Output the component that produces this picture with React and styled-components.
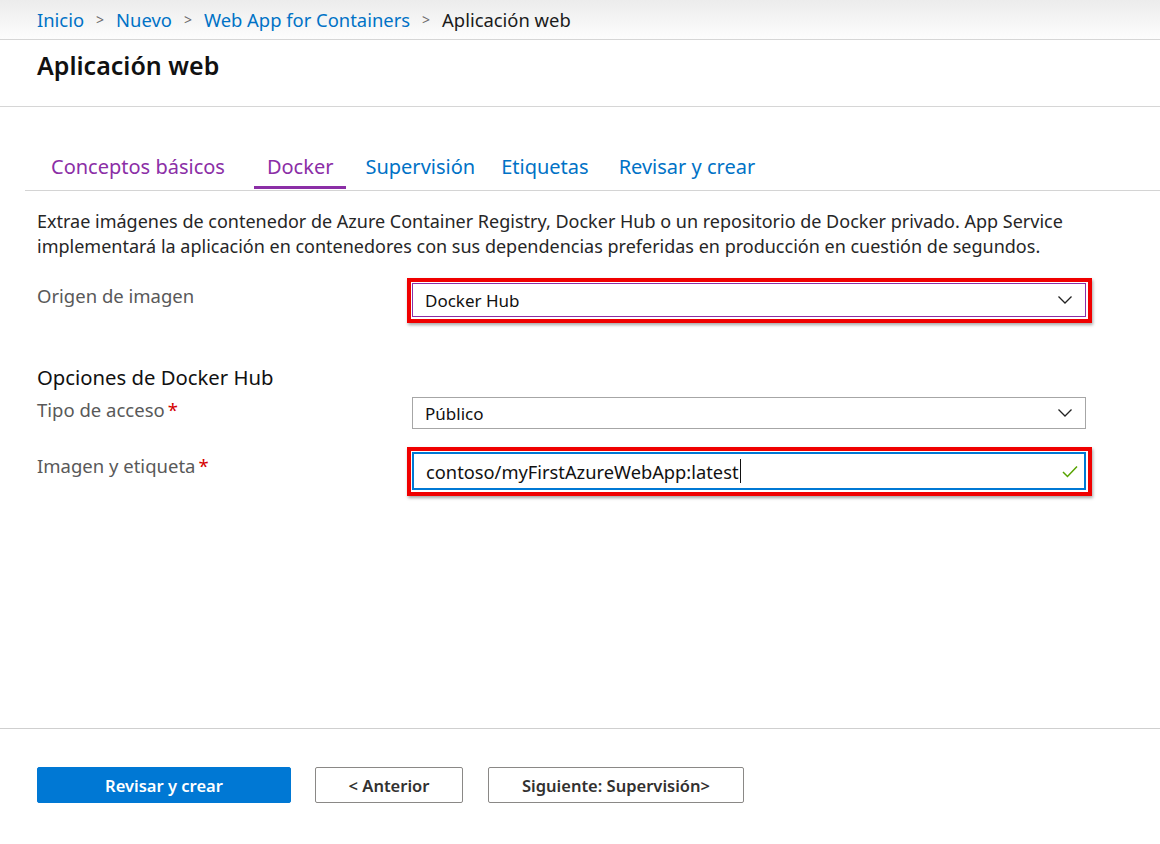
import React from 'react';
import styled, { createGlobalStyle } from 'styled-components';

const GlobalStyle = createGlobalStyle`
  html, body {
    margin: 0;
    padding: 0;
    background: #fff;
  }
  body {
    font-family: "Segoe UI", "Noto Sans", "Open Sans", sans-serif;
    color: #1b1b1b;
  }
`;

const blue = '#0072c6';
const purple = '#8b2ea6';

const Page = styled.div`
  width: 1160px;
  height: 844px;
  display: flex;
  flex-direction: column;
  overflow: hidden;
`;

const Breadcrumb = styled.nav`
  height: 39px;
  border-bottom: 1px solid #d6d6d6;
  background: linear-gradient(#ececec, #fdfdfd);
  display: flex;
  align-items: center;
  padding-left: 37px;
  font-size: 18.4px;
`;

const Crumb = styled.span`
  color: ${props => (props.$current ? '#1b1b1b' : blue)};
`;

const Sep = styled.span`
  color: #6b6b6b;
  font-size: 14px;
  margin: 0 12px 0 12px;
`;

const Header = styled.header`
  height: 67px;
  border-bottom: 1px solid #d6d6d6;
  padding-left: 37px;
  box-sizing: border-box;
`;

const Title = styled.h1`
  margin: 9px 0 0;
  font-size: 25px;
  font-weight: 600;
  line-height: 32px;
  color: #111;
`;

const Body = styled.main`
  flex: 1;
  padding: 38px 0 0 37px;
  box-sizing: border-box;
  border-bottom: 1px solid #cfcfcf;
`;

const TabList = styled.div`
  display: flex;
  margin-left: -12px;
  height: 45px;
  border-bottom: 1px solid #d4d4d4;
`;

const Tab = styled.div`
  padding: 6px 13px 0;
  margin-left: ${props => props.$gap || 0}px;
  font-size: 20px;
  line-height: 32px;
  color: ${props => (props.$visited ? purple : blue)};
  border-bottom: 3px solid ${props => (props.$active ? purple : 'transparent')};
  margin-bottom: 1px;
  white-space: nowrap;
`;

const Description = styled.p`
  margin: 18px 0 0;
  font-size: 18px;
  line-height: 25px;
  color: #262626;
  white-space: nowrap;
`;

const Row = styled.div`
  display: flex;
  align-items: flex-start;
  margin-top: ${props => props.$top}px;
`;

const Label = styled.div`
  width: 375px;
  flex-shrink: 0;
  font-size: 18.5px;
  line-height: 24px;
  color: #595959;
  padding-top: ${props => props.$pt || 0}px;
`;

const Required = styled.span`
  color: #d50000;
  margin-left: 3px;
`;

const SectionTitle = styled.h2`
  margin: 42px 0 0;
  font-size: 20.3px;
  font-weight: 400;
  line-height: 24px;
  color: #111;
`;

const Highlight = styled.div`
  margin: -5px 0 0 -5px;
  border: 4px solid #f00000;
  padding: 1px 2px 2px 1px;
  box-shadow: 1px 2px 3px rgba(0, 0, 0, 0.35);
`;

const Field = styled.div`
  width: 674px;
  height: ${props => props.$h || 34}px;
  box-sizing: border-box;
  border: ${props => props.$bw || 1}px solid ${props => props.$border || '#a6a6a6'};
  display: flex;
  align-items: center;
  padding: 0 ${props => props.$pr || 12}px 0 12px;
  font-size: ${props => props.$fs || 17}px;
  color: #111;
  background: #fff;
`;

const Value = styled.span`
  flex: 1;
  display: flex;
  align-items: center;
`;

const Caret = styled.span`
  display: inline-block;
  width: 1px;
  height: 24px;
  background: #111;
  margin-left: 1px;
`;

const Footer = styled.footer`
  height: 115px;
  display: flex;
  align-items: flex-start;
  padding: 38px 0 0 37px;
  box-sizing: border-box;
`;

const Button = styled.button`
  height: 36px;
  width: ${props => props.$w}px;
  margin-left: ${props => props.$gap || 0}px;
  border-radius: 2px;
  font-family: inherit;
  font-size: 16.5px;
  font-weight: 600;
  cursor: pointer;
  border: 1px solid ${props => (props.$primary ? '#0078d4' : '#8a8886')};
  background: ${props => (props.$primary ? '#0078d4' : '#fff')};
  color: ${props => (props.$primary ? '#fff' : '#323130')};
`;

const Chevron = () => (
  <svg width="16" height="10" viewBox="0 0 16 10">
    <path d="M1.5 1.5 L8 8 L14.5 1.5" fill="none" stroke="#222" strokeWidth="1.3" />
  </svg>
);

const Check = () => (
  <svg width="16" height="13" viewBox="0 0 16 13">
    <path d="M1 7 L5.5 11.5 L15 1.5" fill="none" stroke="#57a300" strokeWidth="1.5" />
  </svg>
);

const App = () => (
  <Page>
    <GlobalStyle />
    <Breadcrumb>
      <Crumb>Inicio</Crumb>
      <Sep>&gt;</Sep>
      <Crumb>Nuevo</Crumb>
      <Sep>&gt;</Sep>
      <Crumb>Web App for Containers</Crumb>
      <Sep>&gt;</Sep>
      <Crumb $current>Aplicación web</Crumb>
    </Breadcrumb>
    <Header>
      <Title>Aplicación web</Title>
    </Header>
    <Body>
      <TabList>
        <Tab $visited $gap={13}>Conceptos básicos</Tab>
        <Tab $visited $active $gap={16}>Docker</Tab>
        <Tab $gap={6}>Supervisión</Tab>
        <Tab $gap={0}>Etiquetas</Tab>
        <Tab $gap={4}>Revisar y crear</Tab>
      </TabList>
      <Description>
        Extrae imágenes de contenedor de Azure Container Registry, Docker Hub o un repositorio de Docker privado. App Service
        <br />
        implementará la aplicación en contenedores con sus dependencias preferidas en producción en cuestión de segundos.
      </Description>
      <Row $top={24}>
        <Label $pt={1}>Origen de imagen</Label>
        <Highlight>
          <Field $border={purple}>
            <Value>Docker Hub</Value>
            <Chevron />
          </Field>
        </Highlight>
      </Row>
      <SectionTitle>Opciones de Docker Hub</SectionTitle>
      <Row $top={8}>
        <Label $pt={1}>
          Tipo de acceso<Required>*</Required>
        </Label>
        <Field $h={32}>
          <Value>Público</Value>
          <Chevron />
        </Field>
      </Row>
      <Row $top={23}>
        <Label $pt={2}>
          Imagen y etiqueta<Required>*</Required>
        </Label>
        <Highlight>
          <Field $h={38} $bw={2} $border="#0078d4" $fs={18.3} $pr={6}>
            <Value>
              contoso/myFirstAzureWebApp:latest
              <Caret />
            </Value>
            <Check />
          </Field>
        </Highlight>
      </Row>
    </Body>
    <Footer>
      <Button $primary $w={254}>Revisar y crear</Button>
      <Button $w={148} $gap={24}>&lt; Anterior</Button>
      <Button $w={256} $gap={25}>Siguiente: Supervisión&gt;</Button>
    </Footer>
  </Page>
);

export default App;
